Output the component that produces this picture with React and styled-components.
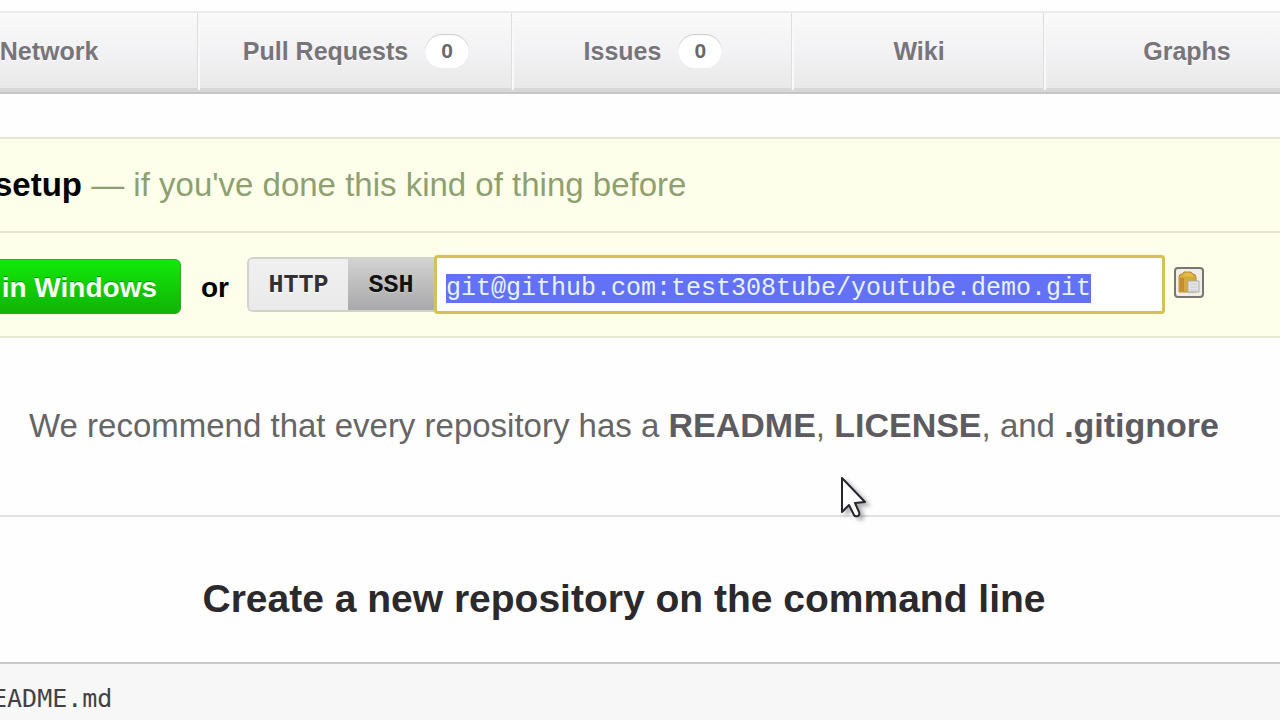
import React, { useEffect, useRef } from "react";
import styled, { createGlobalStyle } from "styled-components";

const GlobalStyle = createGlobalStyle`
  *, *::before, *::after { box-sizing: border-box; }
  html { background: #fefefe; }
  body {
    margin: 0;
    overflow-x: hidden;
    font-family: "Liberation Sans", Arial, sans-serif;
    color: #000;
  }
`;

const Page = styled.div`
  position: relative;
  overflow: hidden;
  min-height: 100vh;
  padding-top: 11px;
  display: flex;
  flex-direction: column;
`;

const Tabs = styled.nav`
  display: grid;
  grid-template-columns: 300fr 314fr 280fr 252fr 284fr;
  margin: 0 -50px 0 -100px;
  height: 83px;
  border-top: 2px solid #ebebeb;
  border-bottom: 2px solid #c6c6c8;
  background: linear-gradient(#fafafa, #f3f2f4 45%, #e8e8e9);
  box-shadow: inset 0 -4px 0 #d7d7d8;
`;

const Tab = styled.a`
  display: flex;
  align-items: center;
  justify-content: center;
  gap: 17px;
  margin-bottom: 2px;
  padding-bottom: 2px;
  border-right: 2px solid #f9f9f9;
  box-shadow: inset -1px 0 0 #dededf;
  color: #777579;
  font-size: 25px;
  font-weight: bold;
  line-height: 32px;
  text-decoration: none;
  text-shadow: 0 1px 0 #fff;
  white-space: nowrap;
`;

const Count = styled.span`
  width: 44px;
  border-radius: 17px;
  background: #fff;
  box-shadow: inset 0 1px 1px #c9c9cb;
  color: #68676b;
  font-size: 21px;
  line-height: 34px;
  text-align: center;
`;

const Setup = styled.section`
  margin-top: 43px;
  border: solid #e3e8cf;
  border-width: 2px 0;
  background: #fdffea;
`;

const SetupTitle = styled.h2`
  margin: 0 0 0 -6px;
  padding: 26px 0;
  font-size: 33px;
  line-height: 40px;
  font-weight: bold;
  white-space: nowrap;
`;

const Aside = styled.span`
  color: #8e9f72;
  font-weight: normal;
`;

const CloneRow = styled.div`
  display: flex;
  align-items: center;
  height: 105px;
  border-top: 2px solid #e3e8cf;
  padding-right: 76px;
`;

const WindowsButton = styled.button`
  margin: 4px 0 0 -12px;
  width: 193px;
  height: 55px;
  padding: 2px 23px 0 12px;
  border: 1px solid #2fac24;
  border-radius: 6px;
  background: linear-gradient(#12e90a, #10b305);
  color: #f6fff2;
  font: bold 28px/40px "Liberation Sans", Arial, sans-serif;
  text-align: right;
  text-shadow: 0 -1px 0 #0a9c05;
  white-space: nowrap;
`;

const Or = styled.span`
  margin: 6px 18px 0 20px;
  font-size: 28px;
  line-height: 40px;
  font-weight: bold;
`;

const Protocols = styled.div`
  display: flex;
  height: 55px;
  border: 2px solid #d1d1cd;
  border-right: 0;
  border-radius: 6px 0 0 6px;
  overflow: hidden;
`;

const Protocol = styled.button`
  width: ${(p) => (p.$active ? 86 : 99)}px;
  padding: 2px 0 0;
  border: 0;
  background: ${(p) => (p.$active ? "linear-gradient(#d2d2d2, #a9a8aa)" : "linear-gradient(#f1f0f1, #eaeaea)")};
  color: ${(p) => (p.$active ? "#111" : "#333033")};
  font: bold 25px/32px "Liberation Mono", monospace;
  text-shadow: 0 1px 0 ${(p) => (p.$active ? "#ccc" : "#fff")};
`;

const CloneUrl = styled.input`
  position: relative;
  flex: 1;
  min-width: 0;
  height: 59px;
  margin-right: 9px;
  padding: 8px 9px 0;
  border: 3px solid #d2c257;
  border-radius: 4px;
  outline: 0;
  box-shadow: 0 0 1px #eee08e;
  background: #fff;
  color: #4b4b4b;
  font: 25px/32px "Liberation Mono", monospace;

  &::selection {
    background: rgba(96, 111, 246, 0.99);
    color: #e8f2ff;
  }
`;

const CopyButton = styled.button`
  display: grid;
  place-items: center;
  width: 30px;
  height: 31px;
  margin-bottom: 4px;
  padding: 0;
  border: 2px solid #77776f;
  border-radius: 4px;
  background: #f1eee9;
`;

const Advice = styled.p`
  margin: 0;
  padding: 67px 32px 69px 0;
  border-bottom: 2px solid #e1e1e1;
  color: #666;
  font-size: 33px;
  line-height: 41px;
  text-align: center;
  white-space: nowrap;
`;

const File = styled.a`
  color: #5d5b5f;
  font-size: 34px;
  font-weight: bold;
  text-decoration: none;
`;

const Heading = styled.h3`
  margin: 0;
  padding: 58px 32px 39px 0;
  color: #2b292c;
  font-size: 39px;
  line-height: 48px;
  text-align: center;
  white-space: nowrap;
`;

const Commands = styled.pre`
  flex: 1;
  margin: 0;
  padding: 19px 0 4px;
  border-top: 2px solid #c9c9c9;
  background: #f7f7f7;
  color: #444145;
  font: 25px/32px "DejaVu Sans Mono", monospace;
  text-indent: -8px;
`;

const Pointer = styled.svg`
  position: absolute;
  left: 836px;
  top: 472px;
  pointer-events: none;
  filter: drop-shadow(4px 3px 2px rgba(60, 60, 70, 0.4));
`;

const tabs = [
  { name: "Network" },
  { name: "Pull Requests", count: 0 },
  { name: "Issues", count: 0 },
  { name: "Wiki" },
  { name: "Graphs" },
];

function ClipboardIcon() {
  return (
    <svg width="24" height="25" viewBox="0 0 24 25" aria-hidden="true">
      <path d="M2 7Q2 4 5 4L7 2H14L16 4Q19 4 19 7V22H2Z" fill="#d6a93c" stroke="#c08f35" />
      <path d="M3 8H7V21H3Z" fill="#c28e2f" />
      <path d="M6 6Q7 3 10 3H13Q16 4 16 7Z" fill="#e3bd4c" />
      <path d="M11 11H22V22H11Z" fill="#e4e4e6" stroke="#adacab" />
      <path d="M13 14H20M13 17H20M13 20H20" stroke="#cdced2" />
    </svg>
  );
}

export default function App() {
  const url = useRef(null);

  useEffect(() => {
    url.current.focus();
    url.current.select();
  }, []);

  return (
    <Page>
      <GlobalStyle />
      <Tabs aria-label="Repository">
        {tabs.map((tab) => (
          <Tab key={tab.name} href="#">
            {tab.name}
            {tab.count !== undefined && <Count>{tab.count}</Count>}
          </Tab>
        ))}
      </Tabs>
      <Setup>
        <SetupTitle>
          setup <Aside>— if you've done this kind of thing before</Aside>
        </SetupTitle>
        <CloneRow>
          <WindowsButton type="button">in Windows</WindowsButton>
          <Or>or</Or>
          <Protocols>
            <Protocol type="button">HTTP</Protocol>
            <Protocol type="button" $active>SSH</Protocol>
          </Protocols>
          <CloneUrl
            ref={url}
            aria-label="Clone URL"
            readOnly
            spellCheck={false}
            value="git@github.com:test308tube/youtube.demo.git"
          />
          <CopyButton type="button" aria-label="Copy to clipboard">
            <ClipboardIcon />
          </CopyButton>
        </CloneRow>
      </Setup>
      <Advice>
        We recommend that every repository has a <File href="#">README</File>,{" "}
        <File href="#">LICENSE</File>, and <File href="#">.gitignore</File>
      </Advice>
      <Heading>Create a new repository on the command line</Heading>
      <Commands>EADME.md</Commands>
      <Pointer width="34" height="48" viewBox="0 0 34 48" aria-hidden="true">
        <path
          d="M6 6V40L13 33L18 43Q19 45 22 44Q24 43 23 40L19 31L29 30Z"
          fill="#fff"
          stroke="#26262d"
          strokeWidth="2"
          strokeLinejoin="round"
        />
      </Pointer>
    </Page>
  );
}
